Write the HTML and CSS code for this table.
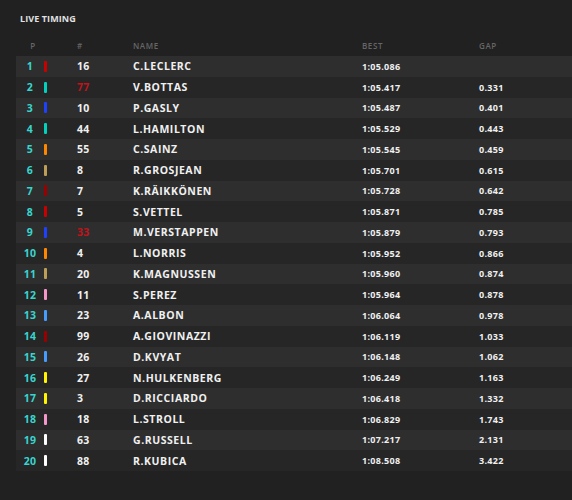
FILE: index.html
```html
<!DOCTYPE html>
<html>
<head>
<meta charset="utf-8">
<link rel="stylesheet" href="styles.css">
</head>
<body>
<div class="panel">
  <div class="title">LIVE TIMING</div>
  <div class="row head">
    <div class="pos">P</div><div></div><div class="num">#</div><div class="name">NAME</div><div class="best">BEST</div><div class="gap">GAP</div>
  </div>
  <div class="rows">
    <div class="row"><div class="pos">1</div><div><span class="bar" style="background:#c80000"></span></div><div class="num">16</div><div class="name">C.LECLERC</div><div class="best">1:05.086</div><div class="gap"></div></div>
    <div class="row"><div class="pos">2</div><div><span class="bar" style="background:#00d2be"></span></div><div class="num red">77</div><div class="name">V.BOTTAS</div><div class="best">1:05.417</div><div class="gap">0.331</div></div>
    <div class="row"><div class="pos">3</div><div><span class="bar" style="background:#1e41ff"></span></div><div class="num">10</div><div class="name">P.GASLY</div><div class="best">1:05.487</div><div class="gap">0.401</div></div>
    <div class="row"><div class="pos">4</div><div><span class="bar" style="background:#00d2be"></span></div><div class="num">44</div><div class="name">L.HAMILTON</div><div class="best">1:05.529</div><div class="gap">0.443</div></div>
    <div class="row"><div class="pos">5</div><div><span class="bar" style="background:#ff8700"></span></div><div class="num">55</div><div class="name">C.SAINZ</div><div class="best">1:05.545</div><div class="gap">0.459</div></div>
    <div class="row"><div class="pos">6</div><div><span class="bar" style="background:#bd9e57"></span></div><div class="num">8</div><div class="name">R.GROSJEAN</div><div class="best">1:05.701</div><div class="gap">0.615</div></div>
    <div class="row"><div class="pos">7</div><div><span class="bar" style="background:#9b0000"></span></div><div class="num">7</div><div class="name">K.RÄIKKÖNEN</div><div class="best">1:05.728</div><div class="gap">0.642</div></div>
    <div class="row"><div class="pos">8</div><div><span class="bar" style="background:#c80000"></span></div><div class="num">5</div><div class="name">S.VETTEL</div><div class="best">1:05.871</div><div class="gap">0.785</div></div>
    <div class="row"><div class="pos">9</div><div><span class="bar" style="background:#1e41ff"></span></div><div class="num red">33</div><div class="name">M.VERSTAPPEN</div><div class="best">1:05.879</div><div class="gap">0.793</div></div>
    <div class="row"><div class="pos">10</div><div><span class="bar" style="background:#ff8700"></span></div><div class="num">4</div><div class="name">L.NORRIS</div><div class="best">1:05.952</div><div class="gap">0.866</div></div>
    <div class="row"><div class="pos">11</div><div><span class="bar" style="background:#bd9e57"></span></div><div class="num">20</div><div class="name">K.MAGNUSSEN</div><div class="best">1:05.960</div><div class="gap">0.874</div></div>
    <div class="row"><div class="pos">12</div><div><span class="bar" style="background:#f596c8"></span></div><div class="num">11</div><div class="name">S.PEREZ</div><div class="best">1:05.964</div><div class="gap">0.878</div></div>
    <div class="row"><div class="pos">13</div><div><span class="bar" style="background:#469bff"></span></div><div class="num">23</div><div class="name">A.ALBON</div><div class="best">1:06.064</div><div class="gap">0.978</div></div>
    <div class="row"><div class="pos">14</div><div><span class="bar" style="background:#9b0000"></span></div><div class="num">99</div><div class="name">A.GIOVINAZZI</div><div class="best">1:06.119</div><div class="gap">1.033</div></div>
    <div class="row"><div class="pos">15</div><div><span class="bar" style="background:#469bff"></span></div><div class="num">26</div><div class="name">D.KVYAT</div><div class="best">1:06.148</div><div class="gap">1.062</div></div>
    <div class="row"><div class="pos">16</div><div><span class="bar" style="background:#fff500"></span></div><div class="num">27</div><div class="name">N.HULKENBERG</div><div class="best">1:06.249</div><div class="gap">1.163</div></div>
    <div class="row"><div class="pos">17</div><div><span class="bar" style="background:#fff500"></span></div><div class="num">3</div><div class="name">D.RICCIARDO</div><div class="best">1:06.418</div><div class="gap">1.332</div></div>
    <div class="row"><div class="pos">18</div><div><span class="bar" style="background:#f596c8"></span></div><div class="num">18</div><div class="name">L.STROLL</div><div class="best">1:06.829</div><div class="gap">1.743</div></div>
    <div class="row"><div class="pos">19</div><div><span class="bar" style="background:#ffffff"></span></div><div class="num">63</div><div class="name">G.RUSSELL</div><div class="best">1:07.217</div><div class="gap">2.131</div></div>
    <div class="row"><div class="pos">20</div><div><span class="bar" style="background:#ffffff"></span></div><div class="num">88</div><div class="name">R.KUBICA</div><div class="best">1:08.508</div><div class="gap">3.422</div></div>
  </div>
</div>
</body>
</html>
```
FILE: styles.css
```css
html, body {
  margin: 0;
  padding: 0;
  background: #212121;
}
body {
  font-family: "Open Sans", "DejaVu Sans", sans-serif;
  color: #f0f0f0;
  width: 572px;
  height: 500px;
  overflow: hidden;
}
.panel {
  padding: 13px 0 0 16px;
}
.title {
  font-size: 9px;
  font-weight: 700;
  color: #e0e0e0;
  padding-left: 4px;
  line-height: 12px;
  letter-spacing: 0.1px;
}
.row {
  display: grid;
  grid-template-columns: 28px 33px 56px 229px 117px 1fr;
  align-items: center;
  height: 20.75px;
  font-size: 10.5px;
  font-weight: 700;
  letter-spacing: 0.3px;
}
.row.head {
  margin-top: 10px;
  height: 20px;
  font-size: 8px;
  font-weight: 600;
  color: #666;
  letter-spacing: 0.6px;
  margin-bottom: 1px;
}
.row.head .pos {
  padding-left: 6px;
}
.rows .row:nth-child(odd) {
  background: #2e2e2e;
}
.rows .row:nth-child(even) {
  background: #262626;
}
.pos {
  text-align: center;
}
.rows .pos {
  color: #38d5cf;
}
.bar {
  display: block;
  width: 3px;
  height: 11px;
  border-radius: 1px;
}
.num.red {
  color: #c0141c;
}
.rows .name {
  letter-spacing: 0.55px;
}
.rows .best, .rows .gap {
  font-size: 9px;
  letter-spacing: 0.3px;
}
```
